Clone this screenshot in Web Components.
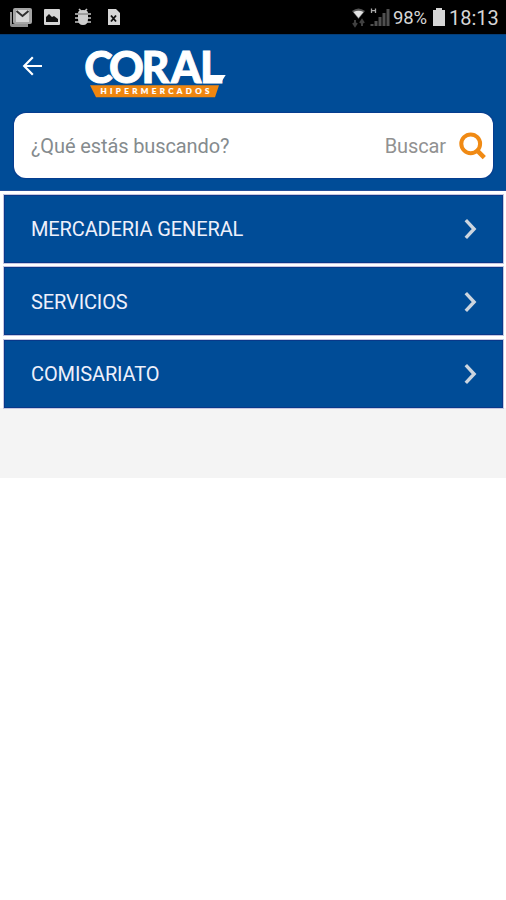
<!DOCTYPE html>
<html lang="es">
<head>
<meta charset="UTF-8">
<meta name="viewport" content="width=device-width, initial-scale=1">
<title>Coral Hipermercados</title>
<style>
    body {
        margin: 0;
        background: #fff;
        font-family: Roboto, "Liberation Sans", sans-serif;
    }
</style>
</head>
<body>
<coral-app></coral-app>

<script>
class StatusBar extends HTMLElement {
    constructor() {
        super();
        this.attachShadow({ mode: 'open' });
        this.shadowRoot.innerHTML = `
            <style>
                :host {
                    display: flex;
                    justify-content: space-between;
                    height: 34px;
                    background: #000;
                    color: #d6d6d6;
                }
                svg { display: block; flex: none; }
                .right { display: flex; align-items: center; padding-right: 8px; }
                .battery { font-size: 18.5px; line-height: 32px; margin: 2px 5px 0 3px; width: 35px; white-space: nowrap; letter-spacing: -0.1px; }
                .time { font-size: 20px; line-height: 32px; margin: 2px 0 0 4px; width: 49px; white-space: nowrap; }
            </style>
            <svg width="130" height="34" viewBox="0 0 130 34">
                <path d="M10 12h2v12h16v3H12q-2 0-2-2z" fill="#929292"/>
                <rect x="13" y="8" width="19" height="16" rx="2" fill="#a5a5a5"/>
                <path d="M16 10h13v12H16z" fill="#d6d6d6"/>
                <path d="M16.500 11l6 5 6-5" fill="none" stroke="#303030" stroke-width="2"/>
                <rect x="44" y="9" width="16" height="16" rx="1" fill="#d6d6d6"/>
                <path d="M46 22v-5l3-3 3 3 2-1 4 3v3z" fill="#101010"/>
                <path d="M79 9l2 2M87 9l-2 2M75 14h16M75 18h16M75 22h16" stroke="#c5c5c5" stroke-width="1.7"/>
                <path d="M78 13q0-3 5-3t5 3v6q0 6-5 6t-5-6z" fill="#cecece"/>
                <path d="M78 14h10" stroke="#555" stroke-width=".8"/>
                <path d="M108 9h8l4 4v12h-12z" fill="#d6d6d6"/>
                <path d="M111 15.500l5 6M116 15.500l-5 6" stroke="#111" stroke-width="1.9"/>
            </svg>
            <div class="right">
                <svg width="38" height="34" viewBox="0 0 38 34">
                    <path d="M0 11q6.500-5 13 0l-6.500 8z" fill="#555"/>
                    <path d="M1.500 12q5-2.500 10 0l-5 6z" fill="#e2e2e2"/>
                    <path d="M3 20v6M1 23l2 3 2-3M10 26v-6M8 23l2-3 2 3" fill="none" stroke="#404040" stroke-width="2"/>
                    <path d="M19.500 8.500v4.500M23.500 8.500v4.500M19.500 10.700h4" stroke="#aaa" stroke-width="1.300"/>
                    <path d="M20 26v-2M24 26v-5M28 26v-9M32 26V13M36 26V9" stroke="#505050" stroke-width="3"/>
                </svg>
                <span class="battery">98%</span>
                <svg width="12" height="34" viewBox="0 0 12 34"><path d="M3 8h6v2h3v16H0V10h3z" fill="#d6d6d6"/></svg>
                <span class="time">18:13</span>
            </div>
        `;
    }
}

class CoralLogo extends HTMLElement {
    constructor() {
        super();
        this.attachShadow({ mode: 'open' });
        this.shadowRoot.innerHTML = `
            <style>
                :host { display: block; width: 142px; height: 50px; }
                svg { display: block; overflow: visible; }
                .name { font: 900 43px Lato, sans-serif; fill: #fff; stroke: #fff; stroke-width: 0.9px; }
                .tag { font: 900 8px Lato, sans-serif; fill: #fff; stroke: #fff; stroke-width: 0.2px; }
            </style>
            <svg width="142" height="50" viewBox="0 0 142 50">
                <text class="name" x="-0.800 24 56.500 86 115" y="32.500">CORAL</text>
                <!-- slanted foot of the L -->
                <path d="M121 24.900h19.700l-5 8H121z" fill="#fff"/>
                <path d="M5 35.200h129l-4 12h-119z" fill="#ef860f"/>
                <text class="tag" x="15.500" y="44.300" textLength="109">HIPERMERCADOS</text>
            </svg>
        `;
    }
}

class AppHeader extends HTMLElement {
    constructor() {
        super();
        this.attachShadow({ mode: 'open' });
        this.shadowRoot.innerHTML = `
            <style>
                :host {
                    display: block;
                    height: 157px;
                    box-sizing: border-box;
                    background: #004c97;
                    border-top: 1px solid #063e78;
                    border-bottom: 1px solid #254f9b;
                }
                .bar {
                    display: flex;
                    height: 78px;
                    box-sizing: border-box;
                    padding: 15px 0 0 22px;
                }
                .back { display: block; margin-top: 5px; }
                coral-logo { margin-left: 41px; }
            </style>
            <div class="bar">
                <svg class="back" width="22" height="22" viewBox="0 0 22 22">
                    <path d="M20 11H2M10.800 2.300L2.200 11l8.600 8.700" fill="none" stroke="#fff" stroke-width="2.200"/>
                </svg>
                <coral-logo></coral-logo>
            </div>
            <slot></slot>
        `;
    }
}

class SearchBox extends HTMLElement {
    constructor() {
        super();
        this.attachShadow({ mode: 'open' });
        this.shadowRoot.innerHTML = `
            <style>
                :host {
                    display: flex;
                    align-items: center;
                    height: 65px;
                    box-sizing: border-box;
                    margin: 0 13px 0 14px;
                    padding: 0 6px 0 17px;
                    border-radius: 12px;
                    background: #fff;
                    box-shadow: 0 0 1px 1px #073c8e;
                    font-size: 20px;
                }
                .hint { flex: 1; color: #858b8e; letter-spacing: -0.11px; }
                .action { color: #919191; letter-spacing: -0.1px; margin-right: 13px; }
                svg { display: block; }
            </style>
            <span class="hint">${this.getAttribute('hint')}</span>
            <span class="action">${this.getAttribute('action')}</span>
            <svg width="28" height="28" viewBox="0 0 28 28">
                <circle cx="11.700" cy="11.800" r="9.400" fill="none" stroke="#f08a14" stroke-width="4"/>
                <path d="M18 18.300l7.300 7.300" stroke="#f08a14" stroke-width="4.500"/>
            </svg>
        `;
    }
}

class CategoryItem extends HTMLElement {
    constructor() {
        super();
        this.attachShadow({ mode: 'open' });
        this.shadowRoot.innerHTML = `
            <style>
                :host {
                    display: flex;
                    justify-content: space-between;
                    align-items: center;
                    box-sizing: border-box;
                    padding: 0.5px 25px 0 26px;
                    background: #004c97;
                    border: 1px solid #09388a;
                    box-shadow: 0 0 0 1px #c6c7e1;
                    color: #eef0fb;
                    font-size: 20px;
                    letter-spacing: -0.12px;
                }
                svg { display: block; }
            </style>
            <slot></slot>
            <svg width="13" height="22" viewBox="0 0 13 22">
                <path d="M1.800 2.200l8.300 8.800-8.300 8.800" fill="none" stroke="#ccd5df" stroke-width="3.400"/>
            </svg>
        `;
    }
}

class CoralApp extends HTMLElement {
    constructor() {
        super();
        this.attachShadow({ mode: 'open' });
        this.shadowRoot.innerHTML = `
            <style>
                :host { display: block; height: 900px; overflow: hidden; }
                .list {
                    display: grid;
                    grid-template-rows: 68px 68px 68px;
                    row-gap: 4.300px;
                    padding: 4px 3px 0 4px;
                    background: #fff;
                }
                .rest { height: 70.400px; background: #f4f4f4; }
            </style>
            <status-bar></status-bar>
            <app-header>
                <search-box hint="¿Qué estás buscando?" action="Buscar"></search-box>
            </app-header>
            <div class="list">
                <category-item>MERCADERIA GENERAL</category-item>
                <category-item>SERVICIOS</category-item>
                <category-item>COMISARIATO</category-item>
            </div>
            <div class="rest"></div>
        `;
    }
}

customElements.define('status-bar', StatusBar);
customElements.define('coral-logo', CoralLogo);
customElements.define('app-header', AppHeader);
customElements.define('search-box', SearchBox);
customElements.define('category-item', CategoryItem);
customElements.define('coral-app', CoralApp);
</script>
</body>
</html>
